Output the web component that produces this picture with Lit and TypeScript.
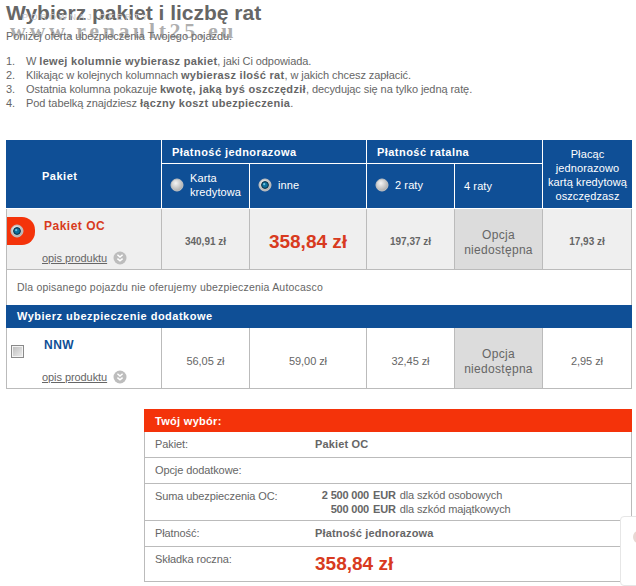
import { LitElement, html, css, svg } from 'lit';
import { customElement } from 'lit/decorators.js';

const radio = (checked: boolean) => html`
  <svg class="radio" width="14" height="14" viewBox="0 0 14 14">
    <defs>
      <radialGradient id="rg" cx="40%" cy="35%" r="70%">
        <stop offset="0" stop-color="#f4f4f4"></stop>
        <stop offset="1" stop-color="#a9a9a9"></stop>
      </radialGradient>
    </defs>
    <circle cx="7" cy="7" r="6" fill="url(#rg)" stroke="#c4c4c4" stroke-width="1"></circle>
    ${checked
      ? svg`<circle cx="7" cy="7" r="3.4" fill="#0b6f9c" stroke="#0a2c42" stroke-width="1"></circle>
            <circle cx="6.2" cy="6.2" r="1.1" fill="#6cc0e0"></circle>`
      : ''}
  </svg>
`;

const more = () => html`
  <svg class="more" width="14" height="14" viewBox="0 0 14 14">
    <circle cx="7" cy="7" r="6.5" fill="#bdbdbd"></circle>
    <path d="M4.4 3.8 7 6 9.6 3.8M4.4 7.6 7 9.8 9.6 7.6" fill="none" stroke="#fff" stroke-width="1.5"></path>
  </svg>
`;

@customElement('app-root')
export class AppRoot extends LitElement {
  static styles = css`
    :host {
      display: block;
      position: relative;
      width: 636px;
      height: 586px;
      overflow: hidden;
      background: #fff;
      font-family: 'Liberation Sans', Arial, sans-serif;
      font-size: 11px;
      letter-spacing: -0.07px;
      color: #666;
    }
    h1 {
      margin: 0;
      padding: 0 0 0 6px;
      font-size: 21px;
      line-height: 25px;
      font-weight: bold;
      letter-spacing: 0;
      color: #666;
    }
    .intro {
      margin: 0;
      padding: 4px 0 0 6px;
      line-height: 14px;
    }
    ol {
      margin: 0;
      padding: 11px 0 0 6px;
      line-height: 14px;
      list-style: none;
      counter-reset: step;
    }
    ol li {
      counter-increment: step;
      display: flex;
      white-space: pre-wrap;
    }
    ol li::before {
      content: counter(step) '.';
      flex: none;
      width: 20px;
    }
    ol b {
      letter-spacing: 0.3px;
    }
    .watermark {
      position: absolute;
      left: 10px;
      top: 20px;
      font-family: 'Liberation Serif', serif;
      font-weight: bold;
      font-size: 22px;
      line-height: 22px;
      letter-spacing: 3.6px;
      color: rgba(120, 120, 120, 0.6);
    }
    .ghost {
      position: absolute;
      left: 22px;
      top: 12px;
      font-size: 9px;
      letter-spacing: 2.5px;
      color: #ccc;
    }
    .grid {
      display: grid;
      grid-template-columns: 156px 88px 117px 88px 88px 89px;
      grid-template-rows: 24px 45px;
      margin: 30px 0 0 6px;
      width: 626px;
      line-height: 14px;
    }
    .head {
      background: #0f4f96;
      color: #fff;
      border-right: 1px solid #fff;
      border-bottom: 1px solid #fff;
      display: flex;
      align-items: center;
      box-sizing: border-box;
      letter-spacing: 0.1px;
    }
    .pkg-head {
      grid-column: 1;
      grid-row: 1 / 3;
      font-weight: bold;
      letter-spacing: 0.5px;
      padding: 4px 0 0 36px;
    }
    .group {
      font-weight: bold;
      letter-spacing: 0.45px;
      padding-left: 10px;
      grid-row: 1;
    }
    .group.one {
      grid-column: 2 / 4;
    }
    .group.two {
      grid-column: 4 / 6;
    }
    .save {
      grid-column: 6;
      grid-row: 1 / 3;
      border-right: 0;
      text-align: center;
      justify-content: center;
      padding-top: 1px;
    }
    .sub {
      grid-row: 2;
      padding: 0 0 3px 8px;
      gap: 6px;
    }
    .sub.plain {
      padding: 0 0 0 9px;
    }
    .radio {
      flex: none;
      display: block;
    }
    .cell {
      display: flex;
      align-items: center;
      justify-content: center;
      text-align: center;
      height: 61px;
      padding-top: 5px;
      box-sizing: border-box;
      border-right: 1px solid #bbb;
      border-bottom: 1px solid #bbb;
    }
    .cell.shade {
      background: #efefef;
    }
    .cell.na {
      background: #dcdcdc;
      font-size: 12px;
      line-height: 15px;
      letter-spacing: 0.3px;
      padding-top: 8px;
    }
    .cell.price {
      font-weight: bold;
      font-size: 10px;
      letter-spacing: 0;
    }
    .cell.big {
      color: #d83a20;
      font-size: 19px;
      font-weight: bold;
      letter-spacing: 0;
    }
    .product {
      grid-column: 1;
      position: relative;
      display: block;
      text-align: left;
      border-left: 1px solid #bbb;
      padding: 9px 0 0 37px;
    }
    .name {
      font-size: 12px;
      font-weight: bold;
      letter-spacing: 0.5px;
      line-height: 16px;
    }
    .name.red {
      color: #d83a20;
    }
    .name.blue {
      color: #0f4f96;
    }
    .desc {
      position: absolute;
      left: 35px;
      bottom: 4px;
      display: flex;
      align-items: center;
      gap: 6px;
    }
    .desc a {
      color: #666;
      text-decoration: underline;
    }
    .tab {
      position: absolute;
      left: 0;
      top: 8px;
      width: 28px;
      height: 28px;
      background: #f4330a;
      border-radius: 0 13px 13px 0;
      display: flex;
      align-items: center;
      padding-left: 3px;
      box-sizing: border-box;
    }
    .check {
      position: absolute;
      left: 4px;
      top: 17px;
      width: 11px;
      height: 11px;
      border: 1px solid #8a8a8a;
      background: linear-gradient(135deg, #bbb, #eee);
      box-shadow: inset 0 0 0 1px #f4f4f4;
    }
    .note {
      grid-column: 1 / -1;
      height: 35px;
      box-sizing: border-box;
      border-left: 1px solid #bbb;
      border-right: 1px solid #bbb;
      padding: 0 0 1px 10px;
      display: flex;
      align-items: center;
      font-size: 10.5px;
      letter-spacing: 0.2px;
    }
    .band {
      grid-column: 1 / -1;
      height: 23px;
      box-sizing: border-box;
      background: #0f4f96;
      color: #fff;
      font-weight: bold;
      letter-spacing: 0.5px;
      padding: 0 0 1px 11px;
      display: flex;
      align-items: center;
    }
    .summary {
      margin: 20px 0 0 144px;
      width: 488px;
      box-sizing: border-box;
      border: 1px solid #bbb;
      border-top: 0;
      line-height: 14px;
    }
    .summary header {
      background: #f4330a;
      color: #fff;
      font-weight: bold;
      letter-spacing: 0.3px;
      height: 23px;
      margin: 0 -1px;
      padding-left: 11px;
      display: flex;
      align-items: center;
    }
    .row {
      display: grid;
      grid-template-columns: 160px 1fr;
      padding: 0 0 2px 10px;
      border-bottom: 1px solid #bbb;
      box-sizing: border-box;
      align-items: center;
      letter-spacing: -0.1px;
    }
    .row.tall {
      padding-bottom: 0;
    }
    .row:last-child {
      border-bottom: 0;
    }
    .row b {
      letter-spacing: 0.15px;
    }
    .sums {
      display: grid;
      grid-template-columns: 54px auto 1fr;
      column-gap: 4px;
    }
    .sums b {
      text-align: right;
      letter-spacing: -0.2px;
    }
    .total {
      color: #d83a20;
      font-size: 19px;
      font-weight: bold;
      letter-spacing: 0;
    }
    .widget {
      position: absolute;
      left: 620px;
      top: 516px;
      width: 30px;
      height: 68px;
      border: 1px solid #e6e6e6;
      border-radius: 4px;
      background: #fff;
    }
    .widget::after {
      content: '';
      position: absolute;
      left: 12px;
      top: 14px;
      width: 10px;
      height: 12px;
      border-radius: 50%;
      background: #e8d8d4;
    }
  `;

  private product(name: string, tone: string, selected: boolean) {
    return html`
      <div class="cell product ${selected ? 'shade' : ''}">
        ${selected
          ? html`<span class="tab">${radio(true)}</span>`
          : html`<span class="check"></span>`}
        <div class="name ${tone}">${name}</div>
        <div class="desc"><a>opis produktu</a>${more()}</div>
      </div>
    `;
  }

  private priceRow(values: string[], save: string, selected: boolean) {
    const shade = selected ? 'shade' : '';
    const bold = selected ? 'price' : '';
    return html`
      <div class="cell ${shade} ${bold}">${values[0]}</div>
      <div class="cell ${shade} ${selected ? 'big' : ''}">${values[1]}</div>
      <div class="cell ${shade} ${bold}">${values[2]}</div>
      <div class="cell na">Opcja<br />niedostępna</div>
      <div class="cell ${shade} ${bold}">${save}</div>
    `;
  }

  render() {
    return html`
      <h1>Wybierz pakiet i liczbę rat</h1>
      <p class="intro">Poniżej oferta ubezpieczenia Twojego pojazdu.</p>
      <ol>
        <li><span>W <b>lewej kolumnie wybierasz pakiet</b>, jaki Ci odpowiada.</span></li>
        <li><span>Klikając w kolejnych kolumnach <b>wybierasz ilość rat</b>, w jakich chcesz zapłacić.</span></li>
        <li><span>Ostatnia kolumna pokazuje <b>kwotę, jaką byś oszczędził</b>, decydując się na tylko jedną ratę.</span></li>
        <li><span>Pod tabelką znajdziesz <b>łączny koszt ubezpieczenia</b>.</span></li>
      </ol>
      <div class="ghost">PORÓWNAJ OFERTY</div>
      <div class="watermark">www.renault25.eu</div>

      <div class="grid">
        <div class="head pkg-head">Pakiet</div>
        <div class="head group one">Płatność jednorazowa</div>
        <div class="head group two">Płatność ratalna</div>
        <div class="head save">Płacąc<br />jednorazowo<br />kartą kredytową<br />oszczędzasz</div>
        <div class="head sub">${radio(false)}<span>Karta<br />kredytowa</span></div>
        <div class="head sub">${radio(true)}<span>inne</span></div>
        <div class="head sub">${radio(false)}<span>2 raty</span></div>
        <div class="head sub plain">4 raty</div>

        ${this.product('Pakiet OC', 'red', true)}
        ${this.priceRow(['340,91 zł', '358,84 zł', '197,37 zł'], '17,93 zł', true)}

        <div class="note">Dla opisanego pojazdu nie oferujemy ubezpieczenia Autocasco</div>
        <div class="band">Wybierz ubezpieczenie dodatkowe</div>

        ${this.product('NNW', 'blue', false)}
        ${this.priceRow(['56,05 zł', '59,00 zł', '32,45 zł'], '2,95 zł', false)}
      </div>

      <section class="summary">
        <header>Twój wybór:</header>
        <div class="row" style="height: 26px"><span>Pakiet:</span><b>Pakiet OC</b></div>
        <div class="row" style="height: 26px"><span>Opcje dodatkowe:</span><span></span></div>
        <div class="row tall" style="height: 37px">
          <span style="align-self: start; padding-top: 5px">Suma ubezpieczenia OC:</span>
          <div class="sums">
            <b>2 500 000</b><b>EUR</b><span>dla szkód osobowych</span>
            <b>500 000</b><b>EUR</b><span>dla szkód majątkowych</span>
          </div>
        </div>
        <div class="row" style="height: 26px"><span>Płatność:</span><b>Płatność jednorazowa</b></div>
        <div class="row tall" style="height: 34px">
          <span style="align-self: start; padding-top: 5px">Składka roczna:</span>
          <span class="total">358,84 zł</span>
        </div>
      </section>
      <div class="widget"></div>
    `;
  }
}

declare global {
  interface HTMLElementTagNameMap {
    'app-root': AppRoot;
  }
}
